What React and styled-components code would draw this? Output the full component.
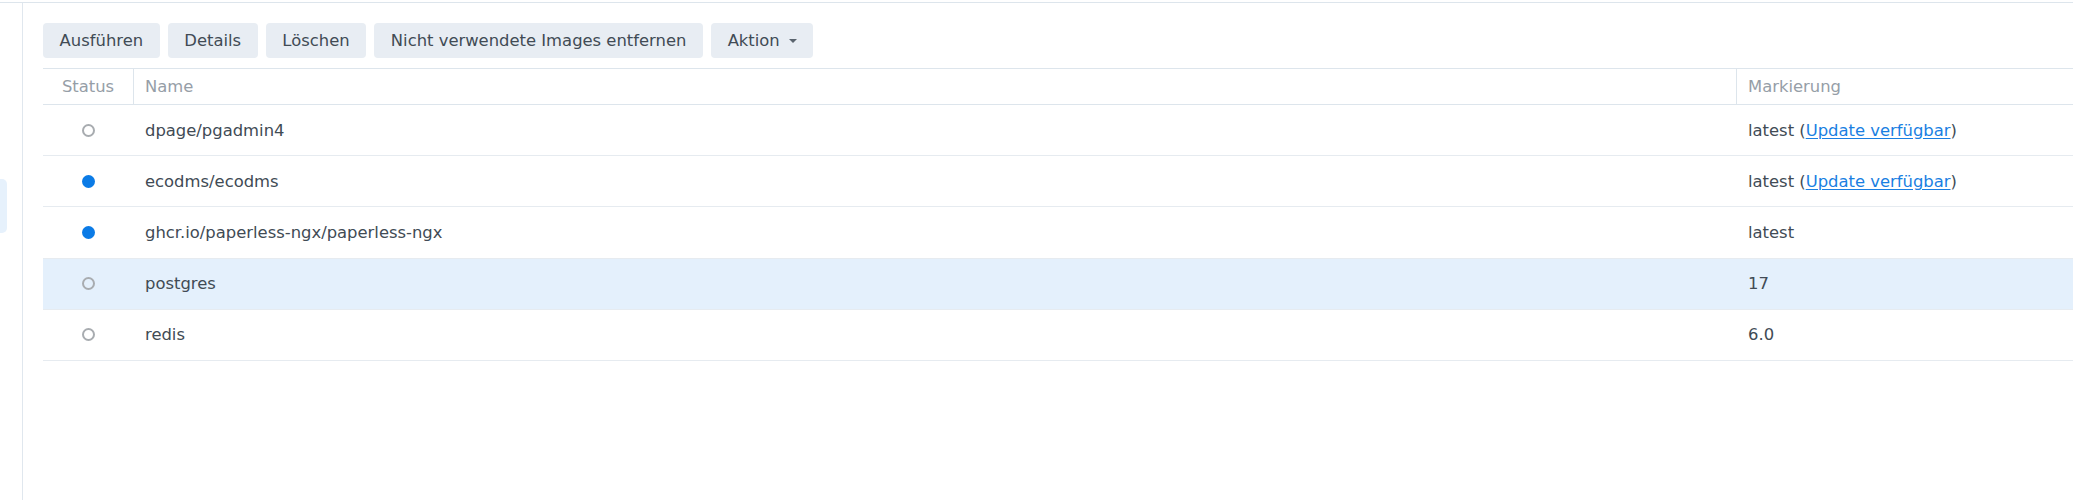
import React from "react";
import styled, { createGlobalStyle } from "styled-components";

const Global = createGlobalStyle`
  html, body { margin: 0; padding: 0; background: #fff; }
  body { font-family: "DejaVu Sans", Verdana, sans-serif; font-size: 16.4px; color: #414b55; }
`;

const Frame = styled.div`
  margin-top: 2px;
  border-top: 1px solid #dde5ec;
  height: 497px;
  display: flex;
`;

const Sidebar = styled.div`
  width: 22px;
  flex: none;
  border-right: 1px solid #e0e7ee;
  padding-top: 176px;
  box-sizing: content-box;
`;

const SideItem = styled.div`
  width: 7px;
  height: 54px;
  background: #e6f1fc;
  border-radius: 0 5px 5px 0;
`;

const Main = styled.div`
  flex: 1;
  padding: 20px 0 0 20px;
  min-width: 0;
`;

const Toolbar = styled.div`
  display: flex;
  gap: 8px;
  margin-bottom: 10px;
`;

const Button = styled.button`
  height: 35px;
  padding: 0 16.6px;
  border: none;
  border-radius: 4px;
  background: #e8edf3;
  color: #414b55;
  font-family: inherit;
  font-size: 16.4px;
  display: flex;
  align-items: center;
  gap: 9px;
  cursor: pointer;
`;

const Caret = styled.span`
  width: 0;
  height: 0;
  border-left: 4px solid transparent;
  border-right: 4px solid transparent;
  border-top: 4px solid #5a646e;
  margin-top: 1px;
`;

const Table = styled.div`
  border-top: 1px solid #dde5ec;
`;

const cols = "90px 1fr 337px";

const HeadRow = styled.div`
  display: grid;
  grid-template-columns: ${cols};
  height: 36px;
  border-bottom: 1px solid #dde5ec;
  box-sizing: border-box;
  color: #969ea7;
`;

const HeadCell = styled.div`
  display: flex;
  align-items: center;
  justify-content: ${(p) => (p.$center ? "center" : "flex-start")};
  padding-left: ${(p) => (p.$center ? "0" : "11px")};
  border-left: ${(p) => (p.$divider ? "1px solid #dde5ec" : "none")};
`;

const Row = styled.div`
  display: grid;
  grid-template-columns: ${cols};
  height: 51.2px;
  border-bottom: 1px solid #e6ebf0;
  box-sizing: border-box;
  background: ${(p) => (p.$selected ? "#e4f0fc" : "transparent")};
`;

const Cell = styled.div`
  display: flex;
  align-items: center;
  justify-content: ${(p) => (p.$center ? "center" : "flex-start")};
  padding-left: ${(p) => (p.$center ? "0" : "12px")};
  white-space: nowrap;
`;

const Dot = styled.span`
  width: 13px;
  height: 13px;
  box-sizing: border-box;
  border-radius: 50%;
  background: ${(p) => (p.$running ? "#0b7be6" : "transparent")};
  border: ${(p) => (p.$running ? "none" : "2px solid #a8acb0")};
`;

const Link = styled.a`
  color: #1a7fe2;
  text-decoration: underline;
  text-underline-offset: 2px;
  cursor: pointer;
`;

const rows = [
  { name: "dpage/pgadmin4", tag: "latest", update: true, running: false },
  { name: "ecodms/ecodms", tag: "latest", update: true, running: true },
  { name: "ghcr.io/paperless-ngx/paperless-ngx", tag: "latest", update: false, running: true },
  { name: "postgres", tag: "17", update: false, running: false, selected: true },
  { name: "redis", tag: "6.0", update: false, running: false },
];

export default function App() {
  return (
    <>
      <Global />
      <Frame>
        <Sidebar>
          <SideItem />
        </Sidebar>
        <Main>
          <Toolbar>
            <Button>Ausführen</Button>
            <Button>Details</Button>
            <Button>Löschen</Button>
            <Button>Nicht verwendete Images entfernen</Button>
            <Button>
              Aktion <Caret />
            </Button>
          </Toolbar>
          <Table>
            <HeadRow>
              <HeadCell $center>Status</HeadCell>
              <HeadCell $divider>Name</HeadCell>
              <HeadCell $divider>Markierung</HeadCell>
            </HeadRow>
            {rows.map((r) => (
              <Row key={r.name} $selected={r.selected}>
                <Cell $center>
                  <Dot $running={r.running} />
                </Cell>
                <Cell>{r.name}</Cell>
                <Cell>
                  {r.tag}
                  {r.update && (
                    <>
                      &nbsp;(<Link>Update verfügbar</Link>)
                    </>
                  )}
                </Cell>
              </Row>
            ))}
          </Table>
        </Main>
      </Frame>
    </>
  );
}
